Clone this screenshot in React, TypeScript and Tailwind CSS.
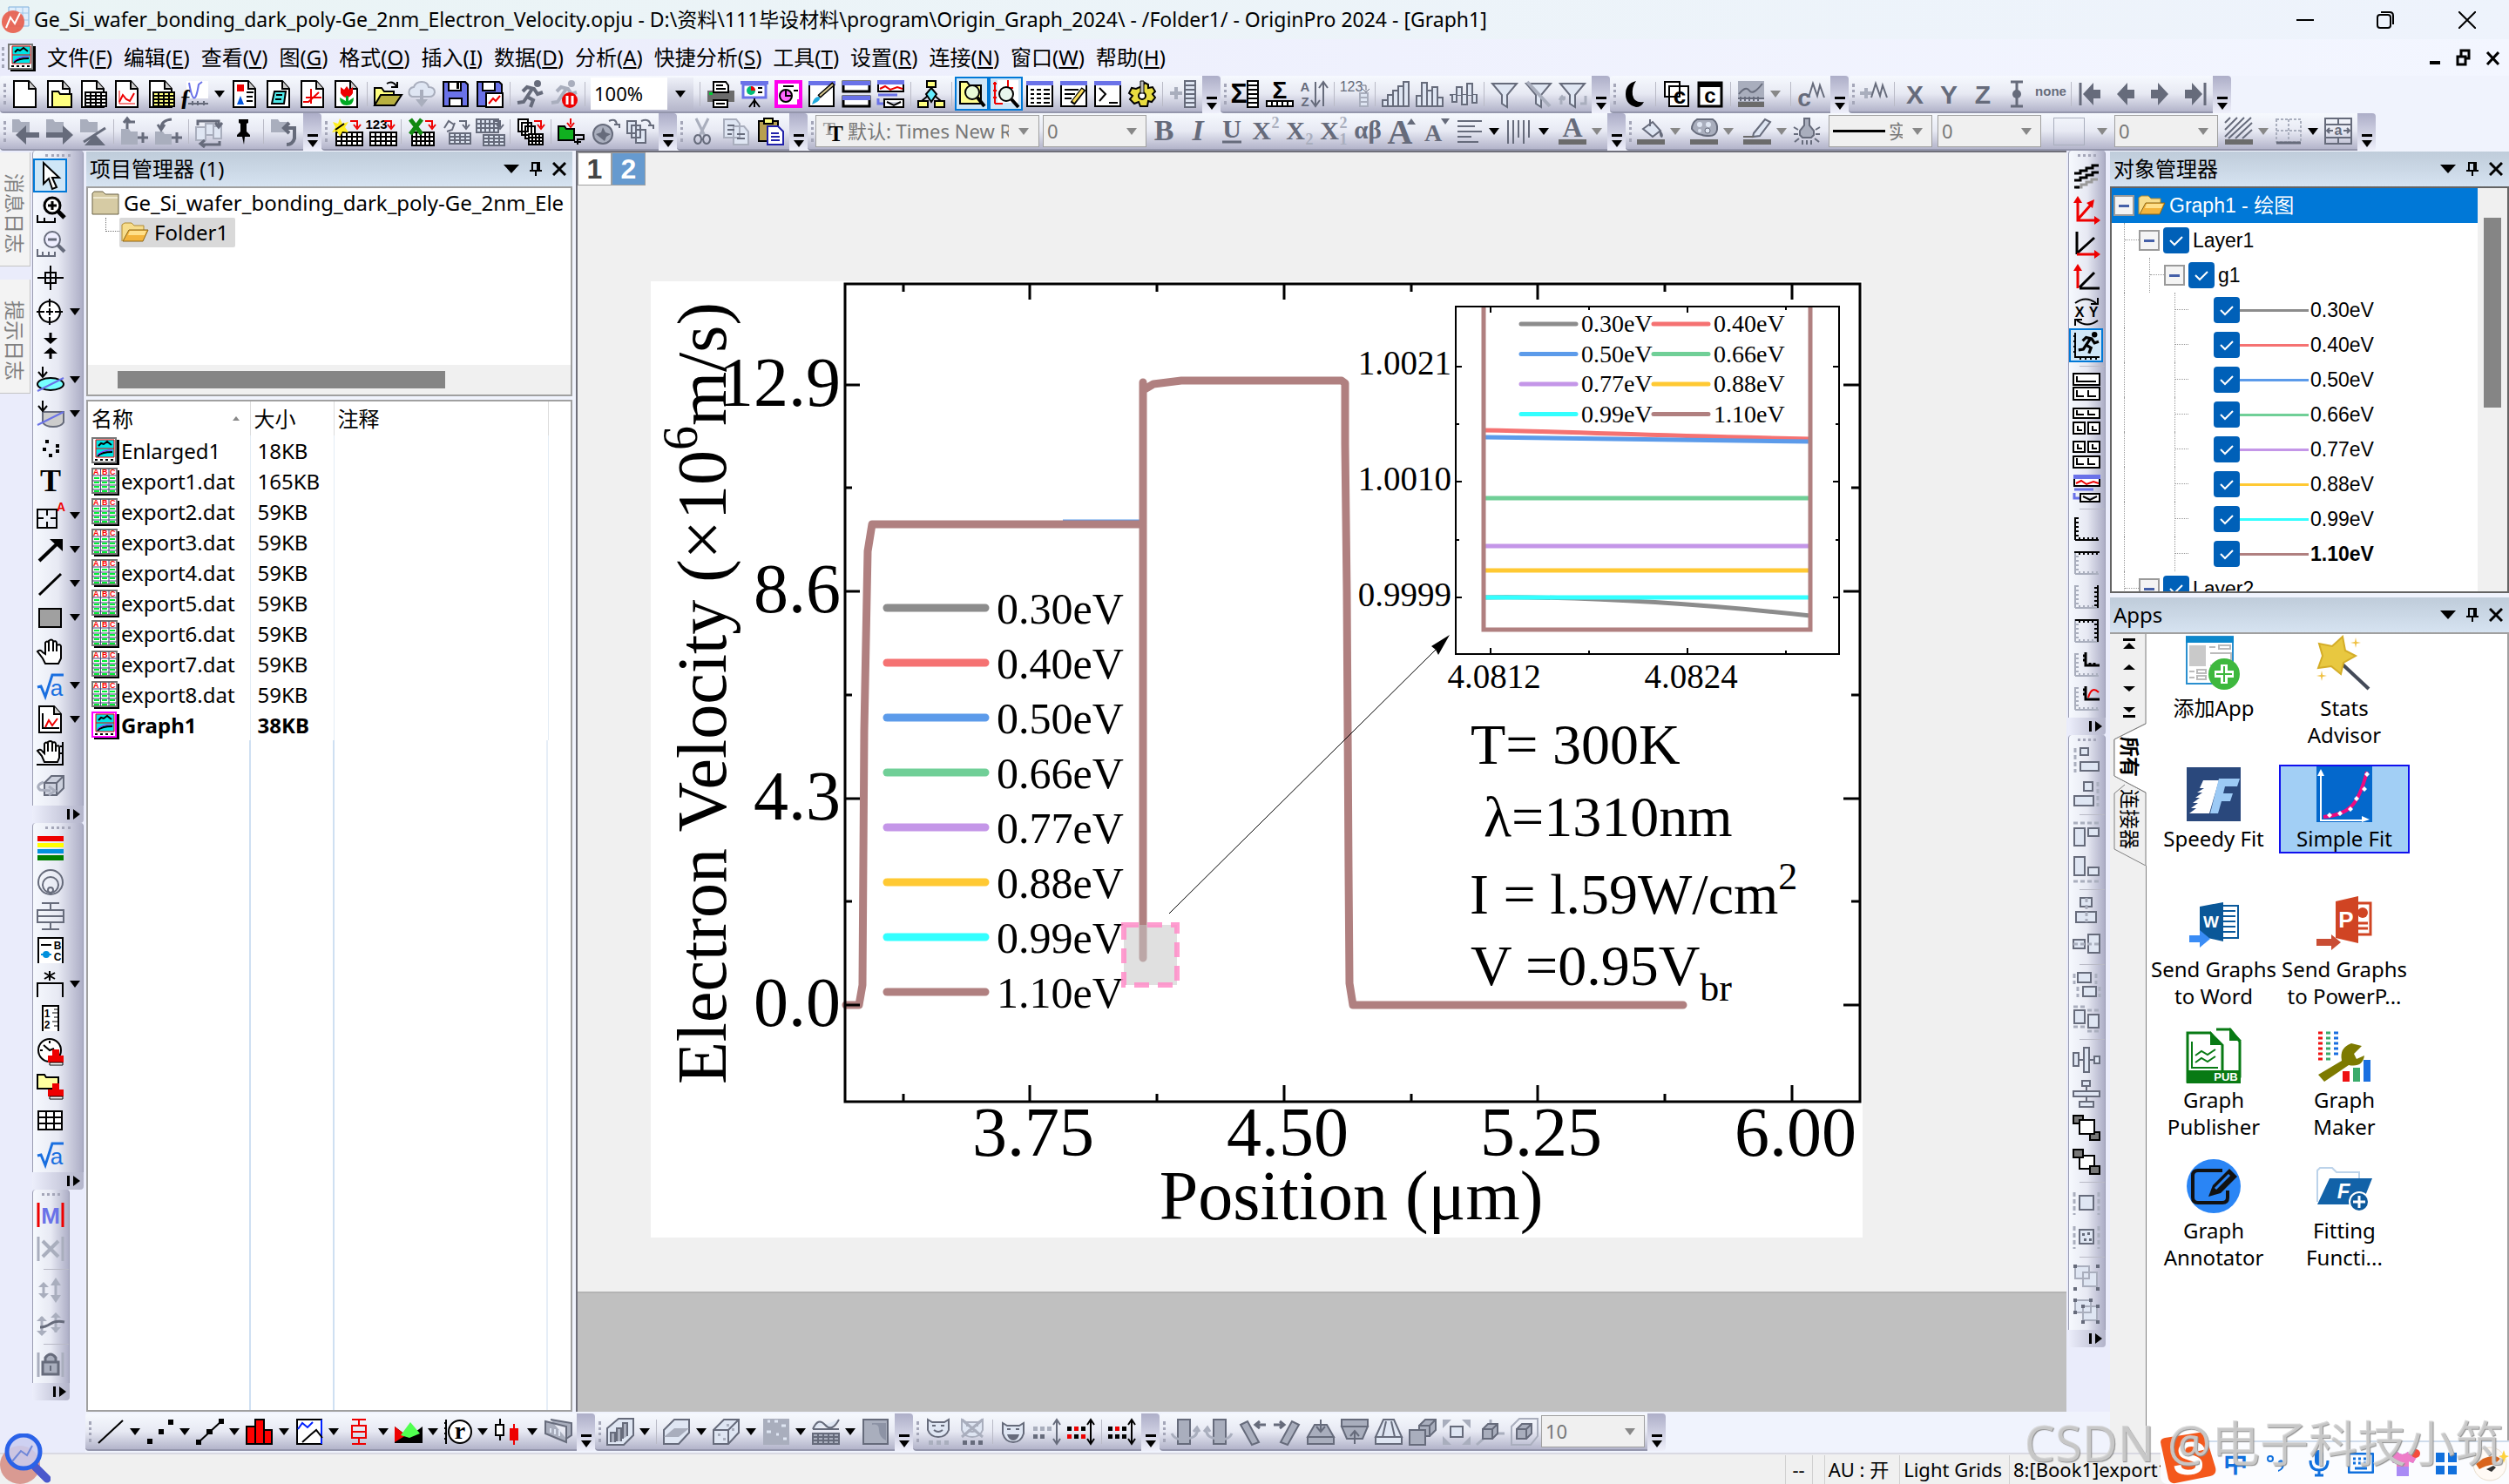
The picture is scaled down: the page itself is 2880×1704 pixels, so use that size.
import React, { ReactNode } from "react";

const GRAY = "#666b7b";
const PALE = "#a9aebd";
const RED = "#ee0000";
const BLUE = "#6a72e8";
const TINT = "#dfe6f3";

const series = [
    { name: "0.30eV", color: "#8c8c8c" },
    { name: "0.40eV", color: "#f57272" },
    { name: "0.50eV", color: "#5c9bea" },
    { name: "0.66eV", color: "#70cf97" },
    { name: "0.77eV", color: "#c496e8" },
    { name: "0.88eV", color: "#ffc933" },
    { name: "0.99eV", color: "#33ffff" },
    { name: "1.10eV", color: "#b08080" },
];

const files = [
    { name: "Enlarged1", size: "18KB", graph: true },
    { name: "export1.dat", size: "165KB" },
    { name: "export2.dat", size: "59KB" },
    { name: "export3.dat", size: "59KB" },
    { name: "export4.dat", size: "59KB" },
    { name: "export5.dat", size: "59KB" },
    { name: "export6.dat", size: "59KB" },
    { name: "export7.dat", size: "59KB" },
    { name: "export8.dat", size: "59KB" },
    { name: "Graph1", size: "38KB", graph: true, active: true },
];

const menus = [
    ["文件", "F"],
    ["编辑", "E"],
    ["查看", "V"],
    ["图", "G"],
    ["格式", "O"],
    ["插入", "I"],
    ["数据", "D"],
    ["分析", "A"],
    ["快捷分析", "S"],
    ["工具", "T"],
    ["设置", "R"],
    ["连接", "N"],
    ["窗口", "W"],
    ["帮助", "H"],
];

/* icon helpers, everything is drawn on a 32x32 grid */
const p = (d: string, stroke = "#000", fill = "none", w = 2) => <path d={d} stroke={stroke} fill={fill} strokeWidth={w} />;
const f = (d: string, fill = "#000") => <path d={d} fill={fill} />;
const t = (s: string, x: number, y: number, size: number, fill = GRAY, cls = "") => (
    <text x={x} y={y} fontSize={size} fill={fill} textAnchor="middle" className={cls}>
        {s}
    </text>
);
const g = (...c: ReactNode[]) => <>{React.Children.toArray(c)}</>;
const serif = "font-['Liberation_Serif',serif] font-bold";
const mono = "font-['Liberation_Sans',sans-serif] font-bold";
const sans = "font-['Liberation_Sans',sans-serif]";

const grid = (x: number, y: number, cols: number, rows: number, cw: number, ch: number, stroke = "#000", fill = "#fff") => {
    let d = `M${x} ${y}h${cols * cw}v${rows * ch}h${-cols * cw}z`;
    for (let i = 1; i < cols; i++) d += `M${x + i * cw} ${y}v${rows * ch}`;
    for (let i = 1; i < rows; i++) d += `M${x} ${y + i * ch}h${cols * cw}`;
    return p(d, stroke, fill);
};
const page = g(p("M3 1h17l8 9v21H3z", "#000", "#fff"), p("M20 1v9h8", "#000", "#ccc"));
const winBar = g(p("M1 3h29v27H1z", "#000", "#fff"), f("M0 1h31v5H0z", BLUE));
const redArrow = p("M20 4h8v7M24 8l4 5 4-5", RED);
const grayArrow = p("M20 4h8v7M24 8l4 5 4-5", GRAY);
const cube = (x: number, y: number, s: number, o: number, fill = TINT) =>
    p(`M${x} ${y}h${s}v${s}h${-s}zM${x} ${y}l${o} ${-o}h${s}v${s}l${-o} ${o}M${x + s} ${y}l${o} ${-o}`, GRAY, fill);
const mask = (c: string) =>
    g(
        p("M4 2l5 3h14l5-3v12q-3 8-12 8T4 14z", c, TINT),
        p("M9 9h4M19 9h4M11 14q5 4 10 0", c)
    );
const runner = (c: string) =>
    g(
        <circle cx="24" cy="4" r="4" fill={c} />,
        p("M7 13l5-5 8 2 4 6 6-2M18 10l-6 9 7 4-3 8M12 19l-4 6-7 1", c, "none", 4)
    );
const axis = (a: string, b: string) => g(p("M3 2v26M3 3h4M3 8h4M3 13h4M3 18h4M3 23h4", a), p("M3 28h27M8 28v-3M13 28v-3M18 28v-3M23 28v-3M28 28v-3", b));
const axisTR = (a: string, b: string) => g(p("M3 3h27M8 3v3M13 3v3M18 3v3M23 3v3", a), p("M29 2v26M29 8h-4M29 13h-4M29 18h-4M29 23h-4", b));
const stamp = g(f("M18 13h8v7h5v8H13v-8h5z", RED), p("M15 28h15v3H15z", "#000", "#fff", 1));
const boxes = (...r: number[][]) => g(...r.map(([x, y, w, h]) => p(`M${x} ${y}h${w}v${h}h${-w}z`, GRAY, TINT)));
const dash = (d: string) => <path d={d} stroke={PALE} strokeWidth="3" strokeDasharray="5 3" fill="none" />;
const bars = (c: string, x: number, hs: number[]) => g(...hs.map((h, i) => p(`M${x + i * 6} 30v${-h}h6v${h}z`, c, TINT)));

const icons: Record<string, ReactNode> = {
    newProject: page,
    newFolder: g(page, p("M8 13h7l2 3h13v15H8z", "#000", "#ffff80")),
    newBook: g(page, grid(7, 14, 4, 4, 6, 4)),
    newGraph: g(page, p("M7 25l4-8 4 5 4 2 5-9", RED), p("M7 12v15h18", RED, "none", 1)),
    newMatrix: g(page, grid(7, 14, 4, 4, 6, 4, "#000", "#ffff80")),
    newFunction: g(f("M6 1h25v20H6z", "#fff"), t("ƒ", 5, 29, 28, "#000", serif), p("M9 3q6 34 11 2l4-3", BLUE), p("M8 27h23M13 24v5M19 24v5M26 24v5", GRAY)),
    newLayout: g(page, f("M7 5h8v8H7z", RED), f("M7 28l4-10 4 10z", "#0055dd"), p("M18 14h8M18 19h7M18 24h7", "#000")),
    newNotes: g(page, p("M11 13h13l-2 14H8z", "#000", "#50e8e8"), p("M13 17h7M12 22h7", "#000")),
    newSheet: g(page, p("M5 25h6l12-11M14 10v17M8 20h18", RED)),
    newTulip: g(page, f("M9 8l4 3 3-4 3 4 4-3v7q-3 5-7 5t-7-5z", RED), f("M15 18h3v6l6-4q0 9-8 9t-8-9l7 4z", "#00aa22")),
    open: g(p("M1 29V9h8l3 4h11v5", "#000", "#ffff80"), p("M1 29l7-12h24l-8 12z", "#000", "#b8b040"), p("M15 4q7-4 11 3M20 8h7V2", "#000")),
    cloud: g(p("M5 19q-5-2-3-8 2-3 5-3Q9 2 16 2t8 6q7 0 7 6-1 5-6 5z", PALE, TINT), f("M14 11h4v11h5l-7 9-7-9h5z", PALE)),
    save: g(p("M2 2h25l3 3v25H2z", "#000", BLUE), p("M8 2h14v10H8z", "#000", "#fff"), p("M9 30v-9h14v9z", "#000", "#fff"), f("M17 3h3v7h-3z")),
    saveTemplate: g(p("M2 2h25l3 3v25H2z", "#000", BLUE), p("M8 2h14v10H8z", "#000", "#fff"), p("M12 15h19v16H12z", "#000", "#fff"), p("M15 27l5-6 3 3 5-6", RED)),
    recalc: runner(GRAY),
    recalcStop: g(runner(PALE), <circle cx="22" cy="23" r="9" fill={RED} />, p("M19 18v10M25 18v10", "#fff", "none", 3)),
    print: g(f("M1 12h31v13H1z", "#6b6b6b"), p("M8 2h14l3 4v8H8z", "#000", "#fff"), p("M8 23h16v8H8z", "#000", "#fff"), p("M11 6h8M11 10h11M11 27h10"), f("M3 14h4v3H3z", "#00cc33")),
    slide: g(f("M0 1h32v4H0z", BLUE), p("M3 5h26v15H3z", BLUE, "#fff", 3), <circle cx="12" cy="12" r="5" fill="#00bb77" />, f("M12 7a5 5 0 0 1 5 5h-5z", RED), p("M20 9h5M20 14h5M16 21v10M16 23l-6 8M16 23l6 8")),
    pagePink: g(p("M2 2h28v28H2z", "#ff00ee", "#fff", 4), <circle cx="13" cy="18" r="7" fill="#ff66ff" stroke="#000" strokeWidth="2" />, p("M13 11v7h7M10 7h12M22 12h5"), f("M26 22h4v8h-4z", "#ff00ee")),
    brush: g(p("M1 3h28v27H1z", "#000", "#fff"), f("M0 1h31v5H0z", BLUE), f("M4 28q2-9 8-9 4 4-8 9z", "#20aadd"), p("M12 19L29 4", "#000", "none", 5), p("M13 18L28 5", "#d8c890", "none", 2)),
    tile: g(p("M1 2h30v11H1zM1 19h30v11H1z", "#000", "#fff", 3), f("M0 1h32v5H0zM0 18h32v5H0z", BLUE)),
    cascade: g(p("M2 2h29v11H2z", "#000", "#fff"), f("M1 0h31v5H1z", BLUE), p("M4 10l6-3 6 4 8-3 6 2", RED), p("M2 17h22M2 21v6h6", BLUE, "none", 3), p("M9 22h22v9H9zM12 25l8 4 8-4", "#000", "#fff")),
    tree: g(p("M16 8v6M16 22v3M5 24l7-6M27 24l-7-6"), p("M11 1h10v7H11zM1 24h11v7H1zM20 24h11v7H20z", "#000", "#ffff80"), p("M16 9l6 7-6 9-6-9z", "#000", "#66eeff")),
    projectExplorer: g(p("M2 27V2h8l3 4h13v21z", "#000", "#ffff90"), <circle cx="16" cy="14" r="8" fill="#e9fbd8" stroke="#000" strokeWidth="2" />, p("M22 20l8 10", "#000", "none", 4)),
    objectManager: g(f("M6 0h24v26H6z", "#fff"), p("M3 2v25M1 4h4M1 12h4M1 20h4M3 27h9M18 0v9h6", RED), <circle cx="16" cy="16" r="8" fill="#e9f5ee" stroke="#000" strokeWidth="2" />, p("M22 22l8 9", "#000", "none", 4)),
    resultsLog: g(winBar, p("M5 11h4M12 11h5M20 11h7M5 16h4M12 16h5M20 16h7M5 21h4M12 21h5M20 21h7M5 26h4M12 26h5M20 26h7")),
    codeBuilder: g(winBar, p("M5 11h16M5 16h12M5 21h8"), p("M14 27L27 10", "#000", "none", 6), p("M15 25L26 11", "#ffe060", "none", 3)),
    scriptWindow: g(winBar, p("M6 9l7 7-7 8M17 26h10")),
    gears: g(p("M16 7l3-4 4 2v4l5-1 3 5-3 3 3 4-4 5-4-1-1 6h-8l-2-5-5 2-5-5 3-4-4-3 3-6 5 1z", "#000", "#e8dc40"), <circle cx="16" cy="18" r="4" fill="#fff" stroke="#000" strokeWidth="2" />, p("M14 1h4v14h-4z", "#000", "#bbb", 1)),
    addColumn: g(p("M1 15h14M8 8v14", PALE, "none", 4), grid(18, 1, 1, 6, 12, 5, GRAY, TINT)),
    sumRow: g(t("Σ", 8, 26, 32, "#000", mono), grid(18, 1, 1, 6, 12, 5)),
    sumColumn: g(t("Σ", 16, 21, 28, "#000", mono), grid(1, 24, 5, 1, 6, 6)),
    sort: g(t("A", 6, 13, 15, GRAY, mono), t("Z", 6, 30, 15, GRAY, mono), p("M18 2v28M27 2v28M13 23l5 7 5-7M22 9l5-7 5 7", GRAY)),
    setValues: g(t("123", 12, 13, 16, GRAY, sans), p("M24 6h5v6M25 10l4 4 4-4", GRAY, "none", 1), grid(22, 15, 1, 3, 9, 5, PALE, TINT)),
    histogram: bars(GRAY, 1, [7, 13, 18, 23, 28]),
    histogram2: bars(GRAY, 1, [12, 27, 18, 22, 10]),
    histogram3: g(p("M0 17h32", GRAY), p("M3 17v8h5V8h6v20h6V4h6v22h5v-9", GRAY, TINT)),
    filter: p("M2 4h28L19 17v14l-6-4V17z", GRAY, TINT),
    filterOff: g(p("M2 4h28L19 17v14l-6-4V17z", GRAY, TINT), p("M3 2l26 28", PALE, "none", 4)),
    filterRedo: g(p("M2 4h28L19 17v14l-6-4V17z", GRAY, TINT), p("M3 28v-8h5M31 18v9h-6M1 23l3-4 3 4", PALE, "none", 3)),
    moon: f("M17 1Q5 4 5 16t12 15q6 0 9-6-11 2-13-8-1-9 4-16z"),
    copyC: g(p("M3 2h17v17H3zM8 7h22v23H8z", "#000", "#fff"), t("c", 20, 27, 26, "#000", mono)),
    boxC: g(p("M3 3h26v27H3z", "#000", "#fff", 3), f("M2 2h28v6H2z"), t("c", 16, 26, 24, "#000", mono)),
    plotTheme: g(f("M1 1h30v19H1zM1 24h30v7H1z", PALE), p("M2 16q8-10 12-4t15-8M1 21h30M4 19v5M9 19v5M14 19v5M19 19v5M24 19v5", GRAY), f("M1 25h30v6H1z", "#6b6b6b")),
    addC: g(t("c", 8, 30, 28, GRAY, mono), p("M13 20l5-16 5 14 3-12 5 14", GRAY)),
    addMarker: g(p("M0 15h14M7 9v12", PALE, "none", 4), p("M13 20l5-16 5 14 3-12 5 14", GRAY)),
    X: t("X", 16, 27, 30, GRAY, mono),
    Y: t("Y", 16, 27, 30, GRAY, mono),
    Z: t("Z", 16, 27, 30, GRAY, mono),
    errorBar: g(p("M9 2h14M9 30h14M16 2v28", GRAY, "none", 3), <circle cx="16" cy="16" r="5" fill={GRAY} />),
    none: t("none", 16, 18, 15, GRAY, mono),
    first: g(p("M3 3v26", GRAY, "none", 3), f("M6 16L18 3v8h8v10h-8v8z", GRAY)),
    prev: f("M6 16L18 3v8h8v10h-8v8z", GRAY),
    next: f("M26 16L14 3v8H6v10h8v8z", GRAY),
    last: g(p("M29 3v26", GRAY, "none", 3), f("M26 16L14 3v8H6v10h8v8z", GRAY)),
    back: g(f("M1 2h8l2 3h10v12H1z", PALE), f("M5 20l12-11v8h15v6H17v8z", GRAY)),
    forward: g(f("M1 2h8l2 3h10v12H1z", PALE), f("M32 20L20 9v8H1v6h19v8z", GRAY)),
    noFolder: g(f("M1 2h8l2 3h10v12H1z", PALE), p("M5 28L30 12", GRAY, "none", 3), f("M6 32l12-13 12 13z", GRAY)),
    folderUp: g(f("M1 13h9l2 3h8v15H1z", PALE), p("M8 13V5h9M4 6l4-5 4 5M20 23h12M26 17v12", GRAY, "none", 3)),
    folderDown: g(f("M1 16h9l2 3h8v12H1z", PALE), p("M8 12q0-9 12-10M4 8l4 6 4-6M20 23h12M26 17v12", GRAY, "none", 3)),
    swap: g(p("M1 11h11v15H1zM12 7h9v13h-9zM21 10h9v14h-9z", PALE, TINT), p("M3 9V4h24v6M23 6l4 5 4-5M28 27v4H8M11 26l-5 4 5 4", GRAY, "none", 3)),
    pin: f("M11 2h11v4l-2 1v9l4 4v2h-6l-1 9-2-9H9v-2l4-4V7l-2-1z"),
    undoFolder: g(f("M1 2h8l2 3h10v12H1z", PALE), p("M18 12h10v12q-2 7-9 7M22 6l-6 6 6 6", GRAY, "none", 4)),
    importWizard: g(grid(4, 17, 5, 3, 6, 5), f("M8 1l3 6 7-2-4 6 4 6-7-1-3 6-3-6-6 1 4-6-3-6 6 2z", "#ffee22"), p("M3 14l10-7", "#000"), redArrow),
    import123: g(grid(4, 17, 5, 3, 6, 5), t("123", 11, 13, 15, "#000", mono), redArrow),
    importExcel: g(grid(5, 17, 5, 3, 5, 5), p("M3 2l13 17M16 2L3 19", "#118811", "none", 5), redArrow),
    reimport: g(grid(9, 18, 4, 3, 6, 4, GRAY, TINT), p("M3 12l5-8 6 4M15 6l-3 8-6 2", GRAY), grayArrow),
    reimportGrid: g(grid(1, 2, 5, 3, 5, 5, GRAY, TINT), grid(9, 20, 4, 3, 6, 4, GRAY, TINT), grayArrow),
    importMulti: g(p("M2 2h11v14H2zM6 6h11v14H6zM10 10h11v14H10z", "#000", "#fff"), grid(14, 19, 4, 3, 4, 4), redArrow),
    connector: g(p("M1 10h7l2 3h9v13H1z", "#000", "#10b020"), p("M15 1v7M11 6l4 5 4-5", RED), p("M20 20h10v5h-7v6M19 28h8")),
    webData: g(<circle cx="13" cy="19" r="11" fill={PALE} stroke={GRAY} strokeWidth="2" />, f("M13 11l3 6 6 2-5 3-2 5-5-4-5-4 6-2z", GRAY), p("M20 4q8-4 9 4M26 8h6v4", GRAY)),
    dataSource: g(p("M2 4h10v14H2zM7 9h10v14H7zM12 14h11v15H12z", GRAY, TINT), p("M18 4q10-4 11 6M26 9h6v4", GRAY)),
    cut: g(p("M9 1l10 20M23 1L13 21", PALE, "none", 3), p("M11 20a4 5 0 1 0 .1 0M21 20a4 5 0 1 0 .1 0", GRAY)),
    copy: g(p("M2 2h14l4 5v16H2zM13 10h12l5 6v15H13z", PALE, TINT), p("M6 9h8M6 14h8M6 19h5M17 19h9M17 24h9", GRAY)),
    paste: g(p("M3 4h22v23H3z", "#000", "#b8a050"), p("M9 1h10v6H9z", "#000", "#ffff80"), p("M13 10h12l6 6v15H13z", "#2020aa", "#fff"), p("M17 18h9M17 22h10M17 26h10", "#2020aa")),
    bold: t("B", 16, 26, 34, GRAY, serif),
    italic: t("I", 16, 26, 34, GRAY, serif + " italic"),
    underline: g(t("U", 16, 23, 30, GRAY, serif), p("M5 28h22", GRAY, "none", 3)),
    superscript: g(t("X", 11, 25, 30, GRAY, serif), t("2", 27, 12, 18, PALE, serif)),
    subscript: g(t("X", 11, 25, 30, GRAY, serif), t("2", 27, 31, 18, PALE, serif)),
    supsub: g(t("X", 11, 25, 30, GRAY, serif), t("2", 27, 12, 18, PALE, serif), t("1", 27, 31, 18, PALE, serif)),
    greek: t("αβ", 16, 24, 29, GRAY, serif),
    bigger: g(t("A", 14, 30, 40, GRAY, serif), f("M22 8l5-7 5 7z", GRAY)),
    smaller: g(t("A", 13, 27, 28, GRAY, serif), f("M22 1l5 7 5-7z", GRAY)),
    align: p("M2 4h28M2 10h20M2 16h28M2 22h16M2 28h24", GRAY),
    verticalLines: p("M3 3v27M9 3v27M15 3v20M21 3v27M27 3v20", GRAY),
    fontColor: g(t("A", 16, 22, 32, GRAY, serif), f("M0 25h32v6H0z", "#6b6b6b")),
    bucket: g(p("M7 13L18 5l9 10-9 7zM15 10V2", GRAY, TINT), f("M26 14q6 6 3 9-4 0-3-9z", GRAY), f("M0 25h32v6H0z", "#6b6b6b")),
    palette: g(p("M8 2h18q6 4 5 12-1 7-9 7-6 0-8-1-8-1-12-7 0-7 6-11z", GRAY, PALE), <circle cx="11" cy="8" r="3" fill={TINT} />, <circle cx="21" cy="8" r="3" fill={TINT} />, <circle cx="11" cy="15" r="2" fill={TINT} />, <circle cx="20" cy="15" r="3" fill={TINT} stroke={GRAY} />, f("M0 25h32v6H0z", "#6b6b6b")),
    pen: g(p("M12 18L25 2l6 3-12 16-8 1z", GRAY, TINT), f("M0 21h12v2H0zM0 25h32v6H0z", "#6b6b6b")),
    bulb: g(p("M13 1h6v8l5 6v5l-3 3H11l-3-3v-5l5-6z", GRAY, PALE), p("M1 11l5 3M31 11l-5 3M1 19h5M26 19h5M2 28l5-4M30 28l-5-4M11 26v5M16 26v5M21 26v5", GRAY)),
    hatch: g(p("M0 6l6-6M0 14L14 0M0 22L22 0M4 24L30 0M12 24l19-18M20 24l11-10", GRAY), f("M0 25h32v6H0z", "#6b6b6b")),
    borders: g(<path d="M2 2h28v26H2zM2 15h28M16 2v26" fill="none" stroke={PALE} strokeWidth="2" strokeDasharray="3 2" />, p("M2 29h28", GRAY, "none", 3)),
    mergeCells: g(p("M1 1h30v29H1zM1 8h30M1 23h30M16 1v7M16 23v7", GRAY), t("a", 16, 20, 16, GRAY, mono), p("M3 15h7M29 15h-7M6 12l-3 3 3 3M26 12l3 3-3 3", GRAY)),
    pointer: p("M8 1v24l6-6 4 12 5-2-5-11h8z", "#000", "#fff"),
    zoomIn: g(<circle cx="18" cy="11" r="9" fill="#fff" stroke="#000" strokeWidth="3" />, p("M13 11h10M18 6v10", "#000", "none", 3), p("M24 17l8 8", "#000", "none", 5), p("M1 22v8h20v-5M9 30v-5")),
    zoomOut: g(<circle cx="18" cy="11" r="9" fill="#eef" stroke={GRAY} strokeWidth="2" />, p("M13 11h10", GRAY, "none", 3), p("M24 17l8 8", GRAY, "none", 4), p("M1 22v8h20v-5M7 30v-5M14 30v-5", GRAY)),
    crosshair: p("M16 2v28M1 16h30M10 10h12v12H10z"),
    target: g(<circle cx="15" cy="16" r="12" fill="#fff" stroke="#000" strokeWidth="2" />, p("M15 1v9M15 22v9M0 16h9M21 16h9M15 12v8M11 16h8")),
    converge: g(p("M16 1v8M16 23v8", "#000", "none", 3), f("M8 7h16l-8 7zM8 25h16l-8-7z")),
    maskLens: g(<ellipse cx="16" cy="21" rx="15" ry="7" fill="#7ff" stroke="#000" strokeWidth="2" />, p("M1 29L31 14", BLUE), p("M7 1v10M2 7l5 6 5-6")),
    maskFace: g(p("M7 14h24v12q-3 5-12 5t-12-5z", GRAY, "#ccc"), p("M1 29L31 14", BLUE), p("M7 1v10M2 7l5 6 5-6")),
    dots: f("M10 7h4v4h-4zM22 12h4v4h-4zM7 16h4v4H7zM22 18h4v4h-4zM14 23h4v4h-4z"),
    text: t("T", 16, 27, 36, "#000", serif),
    annotation: g(p("M1 9h22v21H1zM12 9v7M12 23v7M1 19h7M16 19h7"), t("A", 28, 11, 14, RED, mono)),
    arrowTool: g(p("M3 29L24 9", "#000", "none", 4), f("M15 4h15v14z")),
    lineTool: p("M3 29L28 5", "#000", "none", 3),
    rectTool: p("M3 6h25v21H3z", "#000", "#a0a0a0"),
    hand: p("M10 30l-3-6-6-8q3-3 6 1l3 2V6q2-3 4 0V4q3-3 5 0v1q3-2 4 1v3q4-2 5 1v14l-3 6zM14 6v10M19 5v11M23 7v9", "#000", "#fff"),
    sqrt: g(p("M1 18l4-1 5 12L18 4h13", "#1a6fe0", "none", 3), t("a", 23, 28, 26, "#1a6fe0", sans)),
    graphTool: g(page, p("M7 9v17h19"), p("M10 25l4-8 4 6 6-8", RED)),
    handFrame: g(p("M9 26l-3-7-5-6q3-3 6 1l2 2V5q2-3 4 0V3q3-2 5 0v1q3-2 4 1v3q4-2 4 1v12l-2 5zM13 5v9M18 4v10M22 6v8", "#000", "#fff"), p("M0 29h31M30 3v26M27 8h4M27 16h4")),
    rotate: g(cube(9, 11, 14, 8, "#ccd0dd"), p("M8 10q-10 4-4 9l12 1M14 15l7 5-7 5", PALE, "none", 3)),
    colorStripes: g(f("M1 2h30v6H1z", RED), f("M1 10h30v5H1z", "#ffff00"), f("M1 17h30v5H1z", "#0090dd"), f("M1 24h30v6H1z", "#008000")),
    rings: g(<circle cx="16" cy="16" r="14" fill="none" stroke={GRAY} strokeWidth="2" />, <circle cx="16" cy="19" r="9" fill="none" stroke={GRAY} strokeWidth="2" />, <circle cx="16" cy="25" r="3" fill="none" stroke={GRAY} strokeWidth="2" />),
    boxH: p("M6 1h20M6 31h20M16 1v8M16 23v8M1 9h30v14H1zM1 16h30", GRAY),
    legendTool: g(p("M2 31V2h28v29", "#000", "#fff"), p("M5 10h12"), p("M5 21h12", "#0090dd"), <circle cx="11" cy="21" r="4" fill="#0090dd" />, t("B", 24, 15, 12, "#000", mono), t("C", 24, 28, 12, "#000", mono)),
    asterisk: p("M1 31V15h29v16M15 1v11M9 3l12 7M21 3L9 10"),
    ruler: g(p("M7 31V2h18v29", "#000", "#fff"), t("1", 12, 15, 12, "#000", mono), t("2", 12, 28, 12, "#000", mono), p("M25 6h-5M25 10h-7M25 15h-5M25 20h-7M25 25h-5", "#000", "none", 1)),
    clockStamp: g(<circle cx="15" cy="14" r="13" fill="#fff" stroke="#000" strokeWidth="2" />, p("M8 8l7 6 5-2M15 3v3M4 14h3"), stamp),
    folderStamp: g(p("M1 17V3h8l2 3h14v13H1z", "#000", "#ffffa0"), stamp),
    tableTool: grid(2, 6, 3, 3, 9, 7),
    markM: g(p("M2 2v28M30 2v28", RED, "none", 3), t("M", 16, 26, 26, BLUE, mono)),
    markX: g(p("M2 2v28M30 2v28", PALE, "none", 3), p("M7 7l18 18M25 7L7 25", PALE, "none", 4)),
    updown: g(p("M8 9v14M22 6v20", PALE, "none", 3), f("M2 13l6-6 6 6zM2 20l6 6 6-6zM16 11l6-9 6 9zM16 22l6 9 6-9z", PALE)),
    updownLine: g(p("M6 8v20M22 6v20", PALE, "none", 3), f("M0 13l6-6 6 6zM0 24l6 6 6-6zM16 9l6-6 6 6zM16 20l6 6 6-6z", PALE), p("M4 20q6 0 12-4t16-2", GRAY, "none", 3)),
    lock: g(p("M2 2v28M30 2v28", PALE, "none", 3), p("M10 12V8q6-8 12 0v4M7 13h18v14H7z", GRAY, PALE, 3), p("M16 17v6", GRAY)),
    plotLine: p("M2 29L30 3"),
    plotScatter: f("M1 24h6v6H1zM14 13h6v6h-6zM25 2h6v6h-6z"),
    plotLineSymbol: g(p("M3 28L29 4"), f("M0 25h6v6H0zM12 13h7v6h-7zM26 1h6v6h-6z")),
    plotBar: p("M1 30V10h10v20zM11 30V2h10v28zM21 30V14h9v16z", "#000", "#ff0000"),
    plotMulti: g(p("M2 2h28v28H2z", "#000", "#fff"), p("M3 13l5-7 6 5 6-6M30 2v28", "#0020ff"), p("M8 28l10-9 6-5 7 9")),
    plotBox: p("M8 2h16M8 30h16M16 2v7M16 23v7M8 9h16v14H8zM8 16h16", RED),
    plotArea: g(f("M0 10l16 12 16-12v19H0z"), f("M0 10l13 10L0 28z", RED), f("M7 20L18 5l11 13-12 5z", "#50ff50")),
    plotPolar: g(<circle cx="18" cy="16" r="13" fill="#fff" stroke="#000" strokeWidth="2" />, p("M2 2v28M0 6h3M0 12h3M0 18h3M0 24h3"), t("r", 18, 24, 28, "#000", serif)),
    plotCandle: g(p("M7 1v7M7 20v6M2 8h9v12H2z", "#000", "#fff"), p("M23 7v24", RED), f("M18 12h10v14H18z", RED)),
    plotTemplate: g(p("M2 4l24 6v18L2 18zM26 24l6-4V6L8 2", GRAY, PALE), p("M8 12v5M13 13v6M18 14v7", TINT)),
    bar3d: g(p("M1 12L14 1h17v19L20 31H1z", GRAY, TINT), p("M5 28V17h5v11M12 27V12h5v15M19 24V6h5v15", GRAY, PALE)),
    surface3d: g(p("M1 14L13 2h17v15L18 30H1z", GRAY, TINT), f("M1 22l12-10h17L18 22z", PALE)),
    scatter3d: g(p("M1 14L13 2h17v15L18 30H1zM1 14h17v16M18 14L30 2", GRAY, TINT), f("M6 18h3v3H6zM12 23h3v3h-3zM16 7h3v3h-3zM22 12h3v3h-3z", PALE)),
    contour: g(f("M1 1h30v30H1z", PALE), p("M6 4h3M14 4h4M22 9h5M5 16h5M16 19h3M24 24h4", TINT, "none", 3)),
    waves: g(p("M1 13q6-14 14-5t16-6M1 13h30", GRAY, TINT), grid(1, 18, 5, 3, 6, 4, GRAY, PALE)),
    heat: g(p("M2 2h28v28H2z", GRAY, PALE), f("M12 8q8-2 8 6t8 12V6H12z", "#8d93a5")),
    mask1: g(mask(GRAY), f("M5 26h5v5H5zM14 26h5v5h-5zM23 26h5v5h-5z", PALE)),
    mask2: g(mask(PALE), p("M4 2l24 20M28 2L4 22", PALE, "none", 3), f("M5 26h5v5H5zM14 26h5v5h-5zM23 26h5v5h-5z", GRAY)),
    mask3: g(p("M4 6l5 3h14l5-3v12q-3 10-12 10T4 18z", GRAY, TINT), p("M9 13h4M19 13h4", GRAY), f("M9 19h14q-2 7-7 7t-7-7z", GRAY)),
    cellsGray: g(f("M0 10h5v5H0zM8 10h5v5H8zM16 10h5v5h-5z", PALE), f("M0 19h5v5H0zM8 19h5v5H8z", GRAY), p("M27 3v26M23 8l4-6 4 6M23 24l4 6 4-6", GRAY)),
    cellsRed: g(f("M0 10h5v5H0zM16 10h5v5h-5zM8 19h5v5H8z"), f("M8 10h5v5H8zM0 19h5v5H0zM16 19h5v5h-5z", RED), p("M27 3v26M23 8l4-6 4 6M23 24l4 6 4-6")),
    cellsBlack: g(f("M0 10h5v5H0zM16 10h5v5h-5zM0 19h5v5H0zM8 19h5v5H8zM16 19h5v5h-5z"), f("M8 10h5v5H8z", RED), p("M27 3v26M23 8l4-6 4 6M23 24l4 6 4-6")),
    spinLeft: g(p("M8 2h14v28H8z", GRAY, PALE), p("M1 18q4 9 18 6 12-2 11-10M26 16l4-5 3 5", PALE, "none", 3)),
    spinRight: g(p("M10 2h14v28H10z", GRAY, PALE), p("M31 18q-4 9-18 6-12-2-11-10M-1 16l4-5 3 5", PALE, "none", 3)),
    tiltLeft: g(p("M2 8l8-4 13 24-8 3z", GRAY, PALE), p("M31 8H20M24 4l-5 4 5 4", GRAY, "none", 3)),
    tiltRight: g(p("M30 8l-8-4L9 28l8 3z", GRAY, PALE), p("M1 8h11M8 4l5 4-5 4", GRAY, "none", 3)),
    raise: g(p("M1 22l8-14h14l8 14zM1 22h30v8H1z", GRAY, PALE), p("M16 2v12M11 10l5 6 5-6", GRAY)),
    lower: g(p("M1 10h30l-6 14H7zM1 2h30v8H1z", GRAY, PALE), p("M16 16v14M11 21l5-6 5 6", GRAY)),
    perspective: g(p("M10 2h12l9 20H1zM1 22h30v8H1zM13 4l-4 18M19 4l4 18", GRAY, TINT)),
    boxes3d: g(cube(12, 9, 12, 7, PALE), p("M1 14h18v17H1z", GRAY, PALE)),
    fit3d: g(f("M0 2h10L0 12zM32 2H22l10 10zM0 31h10L0 21zM32 31H22l10-10z", PALE), p("M9 10h14v12H9z", GRAY, TINT)),
    axisCube: g(p("M16 2v10M22 18h10M9 23l-9 8", PALE, "none", 3), cube(7, 13, 11, 6, PALE)),
    frameCube: g(p("M1 10L10 1h21v20l-8 10H1z", PALE), cube(7, 13, 11, 6, PALE)),
    slashes: g(
        p("M4 29h6v-3h6v-3h6v-3h7", "#999", "none", 3),
        p("M2 13h7v-3h7V7h7V4h7M2 21h7v-3h7v-3h7v-3h7M2 29h6", "#000", "none", 3)
    ),
    axesRed: g(p("M6 4v24h24M6 27L22 9", RED, "none", 3), f("M1 8l5-8 5 8zM25 23l7 5-7 5zM16 8l9-4-2 10z", RED)),
    axesBlack: g(p("M5 2v26M5 27L25 9", "#000", "none", 3), p("M5 28h24", RED, "none", 3), f("M25 23l7 5-7 5z", RED)),
    axesUp: g(p("M6 5v23", RED, "none", 3), f("M1 8l5-8 5 8z", RED), p("M8 28h23M8 27L25 10", "#000", "none", 3)),
    swapXY: g(t("X", 8, 22, 16, "#000", mono), t("Y", 24, 22, 16, "#000", mono), p("M3 6q12-9 24 0M29 0v7h-8M29 26q-12 9-24 0M3 32v-7h8")),
    rescale: g(p("M3 1v28h28M1 5h2M1 11h2M1 17h2M1 23h2M9 29v3M15 29v3M21 29v3M27 29v3"), <g transform="translate(6 0) scale(.8)">{runner("#000")}</g>),
    layout3: g(p("M1 1h30v13H1zM1 17h30v14H1z", "#000", "#fff"), p("M5 4v6h22M5 20v7h8M18 20v7h9")),
    layout4: g(p("M1 2h30v11H1zM1 18h13v13H1zM18 18h13v13H18z", "#000", "#fff"), p("M5 4v5h8M18 4v5h8M6 22v5h5M23 22v5h5")),
    layout5: g(p("M1 1h13v12H1zM18 1h13v12H18zM1 18h30v13H1z", "#000", "#fff"), p("M6 4v5h5M23 4v5h5M5 20v7h8M18 20v7h8")),
    axisBL: axis("#000", "#000"),
    axisT: g(axis(PALE, PALE), p("M2 3h29M8 3v3M13 3v3M18 3v3M23 3v3M28 3v3")),
    axisR: g(axis(PALE, PALE), p("M29 2v26M29 5h-4M29 10h-4M29 15h-4M29 20h-4M29 25h-4")),
    axisTRight: g(axis(PALE, PALE), axisTR("#000", "#000")),
    axisInset: g(axis(PALE, PALE), p("M15 1v15h16M12 5h3M12 10h3M20 16v-3M25 16v-3", "#000", "none", 3)),
    axisInsetPlot: g(axis(PALE, PALE), p("M15 1v15h16M12 5h3M12 10h3", "#000", "none", 3), p("M18 14q4-14 12-6", RED)),
    alignLeft: g(dash("M3 2v28"), boxes([9, 2, 9, 8], [9, 18, 21, 10])),
    alignRight: g(dash("M29 2v28"), boxes([13, 2, 10, 10], [2, 18, 22, 11])),
    alignTop: g(dash("M1 2h30"), boxes([2, 8, 12, 20], [18, 8, 12, 9])),
    alignBottom: g(dash("M1 30h30"), boxes([2, 2, 12, 21], [18, 14, 12, 9])),
    centerV: g(boxes([9, 2, 13, 10], [4, 18, 23, 12]), dash("M16 2v28")),
    centerH: g(boxes([1, 11, 13, 10], [18, 5, 13, 21]), dash("M1 16h30")),
    sameWidth: g(dash("M2 3v12M27 3v12M6 18v12M31 18v12"), boxes([6, 2, 15, 11], [12, 18, 15, 11])),
    sameHeight: g(dash("M1 2h13M1 25h13M17 6h13M17 30h13"), boxes([2, 6, 12, 15], [18, 11, 12, 15])),
    distributeH: g(p("M7 16h18", GRAY), boxes([1, 8, 6, 15], [13, 2, 6, 28], [25, 12, 6, 8])),
    distributeV: g(p("M16 6v20", GRAY), boxes([11, 1, 9, 6], [1, 13, 30, 6], [8, 25, 16, 6])),
    bringFront: g(p("M1 2h11v9H1zM20 21h11v9H20z", "#000", "#777"), p("M8 7h17v16H8z", "#000", "#fff")),
    sendBack: g(p("M8 9h17v15H8z", "#000", "#fff"), p("M1 2h11v9H1zM20 21h11v9H20z", "#000", "#777")),
    group: g(boxes([8, 8, 16, 16]), dash("M2 4v26M30 4v26")),
    ungroup: g(boxes([8, 8, 16, 16]), dash("M2 4v26M30 4v26"), f("M11 12h3v3h-3zM17 11h3v3h-3zM13 18h3v3h-3zM19 18h3v3h-3z", GRAY)),
    cropA: g(p("M3 3h16v14H3zM12 10h16v16H12z", PALE, TINT), f("M1 1h4v4H1zM27 1h4v4h-4zM1 27h4v4H1zM27 27h4v4h-4z", GRAY)),
    cropB: g(p("M3 3h18v14H3zM12 10h16v16H12z", PALE, TINT), f("M1 1h4v4H1zM19 1h4v4h-4zM1 15h4v4H1zM10 8h4v4h-4zM27 8h4v4h-4zM10 26h4v4h-4zM27 26h4v4h-4z", GRAY)),
};

function Icon({ name }: { name: string }) {
    return (
        <svg viewBox="0 0 32 32" className="h-8 w-8 shrink-0 overflow-visible">
            {icons[name]}
        </svg>
    );
}

function Caret({ pale = false }: { pale?: boolean }) {
    return (
        <svg viewBox="0 0 12 8" className="h-2 w-3">
            <path d="M0 0h12L6 8z" fill={pale ? "#888" : "#000"} />
        </svg>
    );
}

/* "name" is a button, "name>" has a drop arrow, "name~" a disabled one, "*name" is pressed, "|" is a divider, "_" a small gap */
function Items({ list, vertical = false }: { list: string; vertical?: boolean }) {
    return (
        <>
            {list.split(" ").map((item, i) => {
                if (item === "_") return <span key={i} className="w-1" />;
                if (item === "|")
                    return vertical ? (
                        <div key={i} className="flex h-2 w-full items-center justify-end pl-3">
                            <span className="h-px w-full bg-[#b9bac6]" />
                        </div>
                    ) : (
                        <div key={i} className="flex h-full w-2 items-center justify-center">
                            <span className="h-7 w-px bg-[#b9bac6]" />
                        </div>
                    );
                const name = item.replace(/[*>~]/g, "");
                const drop = />|~/.test(item);
                return (
                    <div key={i} className="flex shrink-0 items-center">
                        <button
                            aria-label={name}
                            className={
                                item[0] === "*"
                                    ? "flex h-[39px] w-[39px] items-center justify-center border-2 border-[#0078d7] bg-[#cfe6f7]"
                                    : "flex h-[39px] w-[39px] items-center justify-center"
                            }
                        >
                            <Icon name={name} />
                        </button>
                        {drop && (
                            <button aria-label={name + " menu"} className="flex h-[39px] w-[18px] items-center justify-center">
                                <Caret pale={item.endsWith("~")} />
                            </button>
                        )}
                    </div>
                );
            })}
        </>
    );
}

function Bar({ children }: { children: ReactNode }) {
    return (
        <div className="flex h-[43px] shrink-0 items-stretch">
            <div className="flex items-center rounded-l-sm border-b-2 border-[#9496ac] bg-linear-to-b from-[#f6f9fe] via-[#e7e9f3] to-[#b3b4ca] pr-[3px]">
                <span className="mr-[2px] ml-1 h-6 w-[3px] border-l-3 border-dotted border-[#a4a6b8]" />
                {children}
            </div>
            <button
                aria-label="more"
                className="flex w-[21px] flex-col items-center justify-end gap-1 rounded-r-sm bg-linear-to-b from-[#adaec8] to-[#eff0fb] pb-1"
            >
                <span className="h-[3px] w-3 bg-black" />
                <Caret />
            </button>
        </div>
    );
}

function VBar({ list, narrow = false }: { list: string; narrow?: boolean }) {
    return (
        <div className={narrow ? "flex w-[43px] flex-col" : "flex w-[59px] flex-col"}>
            <div className="flex flex-col items-start rounded-t-sm border-x border-[#9a9cb2] bg-linear-to-r from-[#f6f9fe] via-[#e7e9f3] to-[#adaec6] pb-[2px]">
                <span className="mx-auto mt-1 mb-[2px] h-[3px] w-1/2 border-t-3 border-dotted border-[#a4a6b8]" />
                <Items list={list} vertical />
            </div>
            <button
                aria-label="more"
                className="flex h-5 items-center justify-end gap-1 rounded-b-sm bg-linear-to-r from-[#eceefb] to-[#b3b4ca] pr-1"
            >
                <span className="h-3 w-[3px] bg-black" />
                <svg viewBox="0 0 8 12" className="h-3 w-2">
                    <path d="M0 0v12l8-6z" />
                </svg>
            </button>
        </div>
    );
}

function Combo({ label, value, className, enabled = false }: { label: string; value: string; className: string; enabled?: boolean }) {
    return (
        <div className={"relative h-[37px] shrink-0 " + className}>
            <select
                aria-label={label}
                className={
                    enabled
                        ? "h-full w-full appearance-none bg-white px-1 text-[22px] text-black"
                        : "h-full w-full appearance-none border border-[#a0a0a0] bg-[#f0f0f0] px-1 text-[22px] text-[#777]"
                }
            >
                <option>{value}</option>
            </select>
            <span
                className={
                    enabled
                        ? "pointer-events-none absolute top-0 right-0 flex h-full w-[30px] items-center justify-center bg-linear-to-b from-[#eef0f8] to-[#b7b8cc]"
                        : "pointer-events-none absolute top-0 right-0 flex h-full w-[34px] items-center justify-center"
                }
            >
                <Caret pale={!enabled} />
            </span>
        </div>
    );
}

function PanelHeader({ title }: { title: string }) {
    return (
        <div className="flex h-10 shrink-0 items-center bg-linear-to-b from-[#bfccda] to-[#d6e3f1] pr-[7px] pl-1">
            <h2 className="flex-1 text-[24px] leading-[38px]">{title}</h2>
            <div className="flex items-center gap-3">
                <button aria-label="panel menu">
                    <svg viewBox="0 0 18 10" className="h-[10px] w-[18px]">
                        <path d="M0 0h18L9 10z" />
                    </svg>
                </button>
                <button aria-label="auto hide">
                    <svg viewBox="0 0 14 16" className="h-4 w-[14px]">
                        <path d="M3 1h8v9H3zM9 1v9M0 10h14M7 10v6" fill="none" stroke="#000" strokeWidth="2" />
                    </svg>
                </button>
                <button aria-label="close panel">
                    <svg viewBox="0 0 16 16" className="h-4 w-4">
                        <path d="M1 1l14 14M15 1L1 15" stroke="#000" strokeWidth="3" />
                    </svg>
                </button>
            </div>
        </div>
    );
}

function OpenFolder() {
    return (
        <svg viewBox="0 0 32 24" className="h-6 w-8 shrink-0">
            <path d="M1 22V3l3-2h8l3 3h11v5" fill="#f7dd8c" stroke="#b08a30" />
            <path d="M2 22l7-13h22l-6 13z" fill="#f3b43c" stroke="#8a6416" />
            <path d="M10 10h19l-2 5H8z" fill="#ffe08a" />
        </svg>
    );
}

function GraphThumb({ active = false }: { active?: boolean }) {
    return (
        <svg viewBox="0 0 32 32" className="h-8 w-8 shrink-0">
            <path d="M3 3h29v29H3z" />
            <path d="M1 1h27v28H1z" fill="#fff" stroke={active ? "#ff00ff" : "#777"} strokeWidth="2" />
            <path d="M5 3h21v20H5z" fill="#00e5e5" stroke="#e00" strokeWidth="1" />
            <path d="M5 13h21" stroke="#e00" />
            <path d="M8 10l3-3 3 1 4-3 5 4M7 22q4-5 17-5" fill="none" stroke="#000" strokeWidth="2" />
            <path d="M7 20q8-6 17-5" fill="none" stroke="#b0f" />
            <path d="M4 26h3M10 26h3M16 26h3M22 26h3" stroke="#000" strokeWidth="2" />
        </svg>
    );
}

function SheetThumb() {
    return (
        <svg viewBox="0 0 32 32" className="h-8 w-8 shrink-0">
            <path d="M3 3h29v29H3z" />
            <path d="M1 1h28v28H1z" fill="#fff" stroke="#777" strokeWidth="2" />
            <path d="M3 11h6v2H3zM12 11h6v2h-6zM21 11h6v2h-6zM3 16h6v2H3zM12 16h6v2h-6zM21 16h6v2h-6zM3 21h6v2H3zM12 21h6v2h-6zM21 21h6v2h-6zM3 26h6v2H3zM12 26h6v2h-6zM21 26h6v2h-6z" fill="#0e3" />
            <path d="M10.500 1v28M20 1v28M1 9h28M1 15h28M1 20h28M1 25h28" stroke="#447" />
            <g className="font-['Liberation_Sans',sans-serif] font-bold" fontSize="9" fill="#f00">
                <text x="2" y="8">A</text>
                <text x="12" y="8">B</text>
                <text x="21" y="8">C</text>
            </g>
        </svg>
    );
}

function ProjectManager() {
    return (
        <section className="flex w-[563px] shrink-0 flex-col pt-px pr-1 pl-px">
            <PanelHeader title="项目管理器 (1)" />
            <div className="flex h-[241px] shrink-0 flex-col border-2 border-[#a0a0a0] bg-white text-[24px]">
                <div className="flex h-[34px] items-center overflow-hidden pl-1 whitespace-nowrap">
                    <svg viewBox="0 0 32 28" className="mr-[5px] h-7 w-8 shrink-0">
                        <path d="M1 27V3l2-2h10l3 3h15v23z" fill="#d6cba4" stroke="#6b6346" />
                        <path d="M2 8h28" stroke="#efe8cf" strokeWidth="2" />
                    </svg>
                    Ge_Si_wafer_bonding_dark_poly-Ge_2nm_Ele
                </div>
                <div className="flex h-[36px] pl-5">
                    <span className="h-4 w-4 border-b border-l border-dotted border-[#777]" />
                    <span className="flex h-[34px] items-center gap-[6px] rounded-xs bg-[#d9d9d9] pr-2 pl-[2px]">
                        <OpenFolder />
                        Folder1
                    </span>
                </div>
                <div className="mt-auto flex h-[34px] items-center bg-[#f0f0f0] pl-[34px]">
                    <div className="h-5 w-[376px] bg-[#858585]" />
                </div>
            </div>
            <div className="mt-1 flex min-h-0 flex-1 flex-col border-2 border-[#a0a0a0] bg-white">
                <table className="w-full table-fixed border-collapse text-left text-[24px]">
                    <colgroup>
                        <col className="w-[186px]" />
                        <col className="w-[96px]" />
                        <col className="w-[246px]" />
                        <col />
                    </colgroup>
                    <thead>
                        <tr className="h-[39px]">
                            <th className="border-r border-[#dcdcdc] pl-1 font-normal">
                                <span className="flex items-center justify-between pr-3">
                                    名称
                                    <svg viewBox="0 0 8 5" className="h-[5px] w-2">
                                        <path d="M0 5h8L4 0z" fill="#888" />
                                    </svg>
                                </span>
                            </th>
                            <th className="border-r border-[#dcdcdc] pl-1 font-normal">大小</th>
                            <th className="border-r border-[#dcdcdc] pl-1 font-normal">注释</th>
                            <th />
                        </tr>
                    </thead>
                    <tbody>
                        {files.map((file) => (
                            <tr key={file.name} className={file.active ? "h-[35px] font-bold" : "h-[35px]"}>
                                <td className="border-r border-[#e3ecf5] pl-1 leading-[34px]">
                                    <span className="flex items-center gap-[2px]">
                                        {file.graph ? <GraphThumb active={file.active} /> : <SheetThumb />}
                                        {file.name}
                                    </span>
                                </td>
                                <td className="border-r border-[#e3ecf5] pl-2 leading-[34px]">{file.size}</td>
                                <td className="border-r border-[#e3ecf5]" />
                                <td />
                            </tr>
                        ))}
                    </tbody>
                </table>
                <div className="grid flex-1 grid-cols-[187px_96px_245px_1fr]">
                    <span className="border-r-2 border-[#cfe0f2]" />
                    <span className="border-r-2 border-[#cfe0f2]" />
                    <span className="border-r-2 border-[#e6eef7]" />
                </div>
            </div>
        </section>
    );
}

const xTicks = [1182, 1474, 1765, 2057];
const yTicks = [443, 680, 918, 1155];

function Plot() {
    return (
        <svg viewBox="747 324 1391 1098" className="block w-full max-w-[1391px] bg-white font-['Liberation_Serif',serif]">
            <g fontSize="80" textAnchor="middle">
                {["3.75", "4.50", "5.25", "6.00"].map((label, i) => (
                    <text key={label} x={xTicks[i] + 4} y="1328">{label}</text>
                ))}
                <text x="1551" y="1401">Position (μm)</text>
            </g>
            <g fontSize="80" textAnchor="end">
                {["12.9", "8.6", "4.3", "0.0"].map((label, i) => (
                    <text key={label} x="965" y={yTicks[i] + 24}>{label}</text>
                ))}
            </g>
            <text transform="translate(833 1246) rotate(-90)" fontSize="80">
                Electron Velocity (×10
                <tspan dy="-33" fontSize="56">6</tspan>
                <tspan dy="33">m/s)</tspan>
            </text>

            {series.map((s, i) => (
                <g key={s.name}>
                    <path d={`M1018 ${699 + i * 63}h113`} stroke={s.color} strokeWidth="9" strokeLinecap="round" />
                    <text x="1144" y={717 + i * 63} fontSize="50">{s.name}</text>
                </g>
            ))}

            <path d="M1220 599h92" stroke="#5c9bea" strokeWidth="3" />
            <path
                d="M971 1155h15l4-23 2-292 4-206 5-31h311M1312 1101V440M1312 449l12-7 32-4h184l4 3v70l2 170 2 320 1 129 4 25h379"
                fill="none"
                stroke="#b08080"
                strokeWidth="9"
                strokeLinecap="round"
                strokeLinejoin="round"
            />
            <path d="M970 327h1165v939H970z" fill="none" stroke="#000" strokeWidth="3" />
            <path
                d={
                    xTicks.map((x) => `M${x} 327v18M${x} 1266v-19`).join("") +
                    [1037, 1328, 1620, 1911].map((x) => `M${x} 327v9M${x} 1266v-9`).join("") +
                    yTicks.map((y) => `M970 ${y}h17M2135 ${y}h-19`).join("") +
                    [561, 799, 1036].map((y) => `M970 ${y}h8M2135 ${y}h-10`).join("")
                }
                stroke="#000"
                strokeWidth="3"
            />

            {/* zoomed range marker and the pointer to the inset */}
            <path d="M1290 1063h61v69h-61z" fill="#c6c6c6" fillOpacity=".55" />
            <path d="M1290 1063h61v69h-61z" fill="none" stroke="#ff8cc8" strokeOpacity=".85" strokeWidth="6" strokeDasharray="17 10" />
            <path d="M1342 1050L1650 745" stroke="#000" />
            <path d="M1664 730l-21 13 5 4 3 6z" />

            {/* inset */}
            <path d="M1671 353h440v399h-440z" fill="#fff" stroke="#000" strokeWidth="2" />
            <path
                d="M1671 422h7M1671 554h7M1671 687h7M1671 488h4M1671 621h4M2111 422h-7M2111 554h-7M2111 687h-7M2111 488h-4M2111 621h-4M1711 353v7M1937 353v7M1824 353v4M2050 353v4M1711 752v-7M1937 752v-7M1824 752v-4M2050 752v-4"
                stroke="#000"
                strokeWidth="2"
            />
            <g fontSize="39">
                <text x="1666" y="431" textAnchor="end">1.0021</text>
                <text x="1666" y="564" textAnchor="end">1.0010</text>
                <text x="1666" y="697" textAnchor="end">0.9999</text>
                <text x="1715" y="791" textAnchor="middle">4.0812</text>
                <text x="1941" y="791" textAnchor="middle">4.0824</text>
            </g>
            <g fill="none" strokeWidth="5">
                <path d="M1703 687q160-2 375 21" stroke="#8c8c8c" />
                <path d="M1703 495q60 1 150 4t225 6" stroke="#f57272" />
                <path d="M1703 503l375 5" stroke="#5c9bea" />
                <path d="M1703 573h375" stroke="#70cf97" />
                <path d="M1703 628h375" stroke="#c496e8" />
                <path d="M1703 656h375" stroke="#ffc933" />
                <path d="M1703 687h375" stroke="#33ffff" />
                <path d="M1703 354v370h375V354" stroke="#b08080" />
            </g>
            {series.map((s, i) => {
                const x = i % 2 ? 1896 : 1744;
                const y = 373 + Math.floor(i / 2) * 34.5;
                return (
                    <g key={s.name}>
                        <path d={`M${x + 2} ${y}h63`} stroke={s.color} strokeWidth="5" strokeLinecap="round" />
                        <text x={x + 71} y={y + 9} fontSize="28">{s.name}</text>
                    </g>
                );
            })}

            <g fontSize="66">
                <text x="1688" y="878">T= 300K</text>
                <text x="1703" y="961">λ=1310nm</text>
                <text x="1687" y="1050">
                    I = l.59W/cm
                    <tspan dy="-28" fontSize="44">2</tspan>
                </text>
                <text x="1688" y="1132">
                    V =0.95V
                    <tspan dy="18" fontSize="44">br</tspan>
                </text>
            </g>
        </svg>
    );
}

function GraphWindow() {
    return (
        <main className="flex min-w-0 flex-1 flex-col border-t-2 border-l-2 border-[#6f6f7a] bg-[#f0f0f0]">
            <div className="flex h-[38px] text-center font-['Liberation_Sans',sans-serif] text-[32px] leading-[36px] font-bold">
                <button className="w-[39px] border border-[#a0a0a0] bg-white text-[#444]">1</button>
                <button className="w-[39px] border border-[#a0a0a0] bg-[#669acf] text-white">2</button>
            </div>
            <div className="flex-1 pt-[110px] pr-[234px] pl-[84px]">
                <Plot />
            </div>
            <div className="h-[138px] shrink-0 border-t-2 border-[#b4b4b4] bg-[#c0c0c0]" />
        </main>
    );
}

function Expander() {
    return (
        <button aria-label="collapse" className="flex h-6 w-6 shrink-0 items-center justify-center border-2 border-[#9a9a9a] bg-[#f4f4f4]">
            <span className="h-[3px] w-3 bg-[#4560a8]" />
        </button>
    );
}

function Check({ label, children, bold = false }: { label: string; children?: ReactNode; bold?: boolean }) {
    return (
        <label className={bold ? "flex items-center font-bold" : "flex items-center"}>
            <span className="relative block h-[30px] w-[30px]">
                <input type="checkbox" defaultChecked className="block h-[30px] w-[30px] appearance-none rounded-sm bg-[#0060b8]" />
                <svg viewBox="0 0 30 30" className="pointer-events-none absolute inset-0">
                    <path d="M8 15l5 5 9-9" fill="none" stroke="#fff" strokeWidth="2" />
                </svg>
            </span>
            {children}
            <span className={children ? "ml-[2px]" : "ml-1"}>{label}</span>
        </label>
    );
}

function Elbow({ className }: { className: string }) {
    return (
        <span className={"flex flex-col self-stretch border-l border-dotted border-[#999] " + className}>
            <span className="h-1/2 border-b border-dotted border-[#999]" />
        </span>
    );
}

function ObjectManager() {
    return (
        <section className="flex flex-col">
            <PanelHeader title="对象管理器" />
            <div className="flex h-[467px] overflow-hidden border-2 border-[#646464] bg-white font-['Liberation_Sans','Noto_Sans_CJK_SC',sans-serif] text-[23px] leading-10">
                <div className="flex-1">
                    <div className="flex h-10 items-center gap-1 bg-[#0078d7] pl-[2px] text-white">
                        <Expander />
                        <OpenFolder />
                        Graph1 - 绘图
                    </div>
                    <div className="flex h-10 items-center pl-[14px]">
                        <Elbow className="w-[17px]" />
                        <Expander />
                        <span className="w-1" />
                        <Check label="Layer1" />
                    </div>
                    <div className="flex h-10 items-center pl-[14px]">
                        <span className="w-[29px] self-stretch border-l border-dotted border-[#999]" />
                        <Elbow className="w-[17px]" />
                        <Expander />
                        <span className="w-1" />
                        <Check label="g1" />
                    </div>
                    {series.map((s) => (
                        <div key={s.name} className="flex h-10 items-center pl-[14px]">
                            <span className="w-[58px] self-stretch border-l border-dotted border-[#999]" />
                            <Elbow className="w-4" />
                            <span className="w-[29px]" />
                            <Check label={s.name} bold={s.name === "1.10eV"}>
                                <span className="h-[3px] w-[79px]" style={{ background: s.color }} />
                            </Check>
                        </div>
                    ))}
                    <div className="flex h-10 items-center pl-[14px]">
                        <Elbow className="w-[17px]" />
                        <Expander />
                        <span className="w-1" />
                        <Check label="Layer2" />
                    </div>
                </div>
                <div className="w-[34px] bg-[#f0f0f0] px-[7px] pt-[34px]">
                    <div className="h-[218px] bg-[#858585]" />
                </div>
            </div>
        </section>
    );
}

const bi = "font-['Liberation_Sans',sans-serif] font-bold italic";
const bb = "font-['Liberation_Sans',sans-serif] font-bold";

const apps: { name: string; selected?: boolean; icon: ReactNode }[] = [
    {
        name: "添加App",
        icon: (
            <>
                <path d="M1 1h53v54H1z" fill="#fff" stroke="#2a8fcf" strokeWidth="2" />
                <path d="M0 1h55v7H0z" fill="#0b87cb" />
                <path d="M4 11h19v24H4z" fill="#c9c9c9" />
                <path d="M27 13h7M38 11h13v4H38zM28 20h24v14H28M4 41h6M13 39h10v4H13zM4 48h6M13 46h10v4H13z" fill="none" stroke="#bbb" strokeWidth="2" />
                <circle cx="44" cy="44" r="18" fill="#3eb83e" />
                <path d="M44 33v22M33 44h22" stroke="#fff" strokeWidth="8" />
                <path d="M44 35v18M35 44h18" stroke="#3eb83e" strokeWidth="2" />
            </>
        ),
    },
    {
        name: "Stats\nAdvisor",
        icon: (
            <>
                <path d="M29 32l31 29" stroke="#434a58" strokeWidth="4" />
                <path d="M30 1l3 16 12 6-14 8-3 13-11-9-15 2 5-14L3 9l15 3z" fill="#e8c840" stroke="#d4ad28" strokeWidth="2" />
                <path d="M45 2l1 5 5 1-5 1-1 5-1-5-5-1 5-1zM6 40l1 5 5 1-5 1-1 5-1-5-5-1 5-1z" fill="#f0c040" />
            </>
        ),
    },
    {
        name: "Speedy Fit",
        icon: (
            <>
                <path d="M1 1h62v62H1z" fill="#2a487c" />
                <path d="M20 16h18l-11 38H4l8-6H6l8-6H8l8-6h-5l8-6h-6l8-5h-5z" fill="#fff" />
                <path d="M38 14h24l-3 9H45l-2 8h11l-3 9H41l-4 14H28z" fill="#9ccaf5" />
            </>
        ),
    },
    {
        name: "Simple Fit",
        selected: true,
        icon: (
            <>
                <path d="M0 0h64v64H0z" fill="#0468cc" />
                <path d="M5 10v52h50" fill="none" stroke="#fff" strokeWidth="2" />
                <path d="M1 11l4-8 4 8zM52 57l9 4-9 3z" fill="#fff" />
                <path d="M8 58q22-2 32-12T58 6" fill="none" stroke="#ee0a80" strokeWidth="4" />
                <path d="M15 53l3 3-3 3-3-3zM27 51l3 3-3 3-3-3zM39 46l3 3-3 3-3-3zM46 34l3 3-3 3-3-3zM55 23l3 3-3 3-3-3zM58 6l3 3-3 3-3-3z" fill="#fff" />
            </>
        ),
    },
    {
        name: "Send Graphs\nto Word",
        icon: (
            <>
                <path d="M40 10h20v37H40z" fill="#fff" stroke="#0b5a9c" strokeWidth="2" />
                <path d="M43 16h14M43 22h14M43 28h14M43 34h14M43 40h14" stroke="#0b5a9c" strokeWidth="2" />
                <path d="M16 11l27-5v45l-27-6z" fill="#0a5798" />
                <text x="29" y="35" textAnchor="middle" fontSize="19" fill="#fff" className={bb}>W</text>
                <path d="M4 44h12v-6l12 10-12 10v-6H4z" fill="#3a8cf5" />
            </>
        ),
    },
    {
        name: "Send Graphs\nto PowerP...",
        icon: (
            <>
                <path d="M44 7h18v36H44z" fill="#fff" stroke="#d04423" strokeWidth="3" />
                <path d="M48 30h11M48 36h11" stroke="#d04423" strokeWidth="3" />
                <circle cx="53" cy="18" r="6" fill="#d04423" />
                <path d="M22 5l26-6v54l-26-6z" fill="#d04423" />
                <text x="34" y="35" textAnchor="middle" fontSize="26" fill="#fff" className={bb}>P</text>
                <path d="M0 48h17v-5l11 9-11 9v-5H0z" fill="#c94d34" />
            </>
        ),
    },
    {
        name: "Graph\nPublisher",
        icon: (
            <>
                <path d="M35 2h16l11 14v40H44" fill="#fff" stroke="#087a14" strokeWidth="3" />
                <path d="M2 6h26l14 14v42H2z" fill="#fff" stroke="#087a14" strokeWidth="3" />
                <path d="M28 4v16h14zM50 0v15h14z" fill="#087a14" />
                <path d="M7 16v30h30M11 32l7-5 7 4 9-6M11 40l7-5 7 4 9-6" fill="none" stroke="#087a14" strokeWidth="2" />
                <path d="M1 49h62v15H1z" fill="#087a14" />
                <text x="46" y="61" textAnchor="middle" fontSize="13" fill="#fff" className={bb}>PUB</text>
            </>
        ),
    },
    {
        name: "Graph\nMaker",
        icon: (
            <>
                <path d="M2 6h5M2 12h5M2 18h5M2 24h5M2 30h5M2 36h5" stroke="#e11" strokeWidth="3" />
                <path d="M11 6h5M11 12h5M11 18h5M11 24h5M11 30h5M11 36h5" stroke="#3aab6b" strokeWidth="3" />
                <path d="M20 6h5M20 12h5M20 18h5M20 24h5M20 30h5" stroke="#1a6fe0" strokeWidth="3" />
                <path d="M2 54l27-16q-3-15 11-20l12 3-9 9 3 6 9-4q-2 14-18 11L9 62z" fill="#7d7a00" />
                <path d="M30 50h8v12h-8z" fill="#e11" />
                <path d="M42 46h8v16h-8z" fill="#3aab6b" />
                <path d="M54 37h8v25h-8z" fill="#1a6fe0" />
            </>
        ),
    },
    {
        name: "Graph\nAnnotator",
        icon: (
            <>
                <circle cx="32" cy="32" r="31" fill="#2a85f5" />
                <path d="M42 14H14q-6 0-6 6v25q0 6 6 6h28q6 0 6-6v-8" fill="none" stroke="#111" strokeWidth="4" />
                <path d="M26 44l5-13 19-19 9 9-19 19z" fill="#111" />
                <path d="M34 35L50 19" stroke="#2a85f5" strokeWidth="3" />
            </>
        ),
    },
    {
        name: "Fitting\nFuncti...",
        icon: (
            <>
                <path d="M1 50V14l3-3h14l5 5h26v8" fill="#fff" stroke="#bcd3ea" strokeWidth="2" />
                <path d="M1 53l14-30h49L52 53z" fill="#1262a8" />
                <text x="31" y="46" textAnchor="middle" fontSize="24" fill="#fff" className={bi}>F</text>
                <circle cx="49" cy="50" r="11" fill="#0e5a9c" stroke="#fff" strokeWidth="2" />
                <path d="M49 43v14M42 50h14" stroke="#fff" strokeWidth="3" />
            </>
        ),
    },
];

function AppsPanel() {
    return (
        <section className="flex min-h-0 flex-1 flex-col">
            <PanelHeader title="Apps" />
            <div className="flex flex-1 border-t-2 border-[#a0a0a0] bg-[#f0f0f0]">
                <nav className="flex w-[42px] flex-col">
                    <svg viewBox="0 0 42 266" className="block h-[266px] w-[42px]">
                        <path d="M41 0v103L5 121v42l36 19v84" fill="none" stroke="#808080" />
                        <path d="M42 103L5 121v42l37 19z" fill="#fff" />
                        <path d="M41 103L5 121v42l36 19M5 183l12-10M5 183v64l36 19" fill="none" stroke="#808080" />
                        <path d="M15 5h14v3H15zM15 17l7-7 7 7zM15 41l7-6 7 6zM15 60h14l-7 6zM15 84h14l-7 6zM15 93h14v3H15z" />
                        <g fontSize="23" className="font-['Noto_Sans_CJK_SC',sans-serif]">
                            <text transform="translate(14 118) rotate(90)" className="font-bold">所有</text>
                            <text transform="translate(14 178) rotate(90)">连接器</text>
                        </g>
                    </svg>
                    <span className="flex-1 border-r border-[#808080]" />
                </nav>
                <div className="flex-1 border-r-2 border-[#a0a0a0] bg-white pl-[2px]">
                    <ul className="grid grid-cols-[150px_150px]">
                        {apps.map((app) => (
                            <li key={app.name} className="h-[150px]">
                                <button
                                    className={
                                        app.selected
                                            ? "flex w-[150px] flex-col items-center border-2 border-[#1010ee] bg-[#a2cff5]"
                                            : "flex w-[150px] flex-col items-center border-2 border-transparent"
                                    }
                                >
                                    <svg viewBox="0 0 64 64" className="h-16 w-16 overflow-visible">
                                        {app.icon}
                                    </svg>
                                    <span className="-mx-1 pt-[3px] text-[24px] leading-[31px] whitespace-pre">{app.name}</span>
                                </button>
                            </li>
                        ))}
                    </ul>
                </div>
            </div>
        </section>
    );
}

function ImeBar() {
    return (
        <div className="absolute right-0 bottom-0 flex h-[50px] w-[400px] items-center rounded-l-lg border-t-2 border-[#cfdcec] bg-[#fbfcff] pl-[72px]">
            <svg viewBox="0 0 64 60" className="absolute bottom-0 left-0 h-[60px] w-16">
                <path d="M0 12q0-4 5-5L44 1q6-1 8 4l11 36q2 8-6 10l-40 8q-6 1-8-5z" fill="#f4581c" />
                <text x="33" y="49" fontSize="54" textAnchor="middle" fill="#fff" className={bi}>S</text>
            </svg>
            <div className="flex items-center gap-[17px] text-[28px] leading-8 font-bold text-[#1170dd]">
                <button>中</button>
                <svg viewBox="0 0 24 24" className="ml-1 h-6 w-6">
                    <circle cx="5" cy="7" r="3" fill="none" stroke="#1170dd" strokeWidth="2" />
                    <path d="M14 20q5-2 4-6-4 0-4-4 4-4 7 1 1 8-7 11z" fill="#1170dd" />
                </svg>
                <svg viewBox="0 0 24 32" className="ml-2 h-8 w-6">
                    <rect x="7" y="1" width="10" height="18" rx="5" fill="#1170dd" />
                    <path d="M2 13q0 11 10 11t10-11M12 24v6M7 30h10" fill="none" stroke="#1170dd" strokeWidth="3" />
                </svg>
                <svg viewBox="0 0 30 24" className="ml-1 h-6 w-[30px]">
                    <rect x="1" y="1" width="28" height="22" rx="2" fill="none" stroke="#1170dd" strokeWidth="3" />
                    <path d="M6 7h3M12 7h3M18 7h3M24 7h1M6 12h3M12 12h3M18 12h3M24 12h1M8 18h14" stroke="#1170dd" strokeWidth="3" />
                </svg>
                <svg viewBox="0 0 36 32" className="h-8 w-9">
                    <path d="M1 9l9-6q5 6 12 0l10 6-4 7-5-2v17H9V14l-4 2z" fill="#a98bf5" />
                    <path d="M1 9l9-6q5 6 12 0l10 6-4 7-5-2v6H9v-6l-4 2z" fill="#ee7cc8" />
                    <circle cx="31" cy="5" r="5" fill="#f54b3c" />
                </svg>
                <svg viewBox="0 0 26 28" className="h-7 w-[26px]">
                    <path d="M1 2h10v11H1zM15 2h10v11H15zM1 17h10v10H1zM15 17h10v10H15z" fill="#1170dd" />
                </svg>
                <svg viewBox="0 0 42 42" className="h-[42px] w-[42px]">
                    <circle cx="20" cy="22" r="19" fill="#fffaf5" stroke="#e7dccb" />
                    <path d="M4 22l8-6q14-6 20 0l-6 6q-12 2-18 6z" fill="#d9641c" />
                    <path d="M16 28l8-4 3 2-5 5z" fill="#333" />
                    <path d="M36 6l2 6 4 1-4 2-2 6-2-6-4-2 4-1z" fill="#ffd23c" />
                </svg>
            </div>
        </div>
    );
}

function App() {
    return (
        <div className="relative flex h-screen flex-col overflow-hidden bg-[#f0f3fd] font-['Noto_Sans','Noto_Sans_CJK_SC',sans-serif] text-black">
            {/* title bar */}
            <header className="flex h-[45px] shrink-0 items-center bg-linear-to-r from-[#eaf4f5] to-[#eef3fc] pl-[2px]">
                <svg viewBox="0 0 32 32" className="h-8 w-8">
                    <path d="M8 1h23v22H8z" fill="#dfeefc" stroke="#7fb0dd" />
                    <path d="M16 1v22M24 1v22M8 8h23M8 16h23" stroke="#9fc6e8" />
                    <circle cx="13" cy="18" r="13" fill="#e8604e" fillOpacity=".92" />
                    <path d="M5 25l5-12 5 7 6-12" fill="none" stroke="#fff" strokeWidth="2" />
                </svg>
                <h1 className="ml-[5px] flex-1 text-[23px] leading-[45px]">
                    Ge_Si_wafer_bonding_dark_poly-Ge_2nm_Electron_Velocity.opju - D:\资料\111毕设材料\program\Origin_Graph_2024\ - /Folder1/ - OriginPro 2024 - [Graph1]
                </h1>
                <div className="flex">
                    <button aria-label="minimize" className="flex w-[92px] items-center justify-center">
                        <svg viewBox="0 0 20 20" className="h-5 w-5">
                            <path d="M0 10h20" stroke="#000" strokeWidth="2" />
                        </svg>
                    </button>
                    <button aria-label="restore" className="flex w-[92px] items-center justify-center">
                        <svg viewBox="0 0 20 20" className="h-5 w-5">
                            <rect x="1" y="4" width="15" height="15" rx="3" fill="none" stroke="#000" strokeWidth="2" />
                            <path d="M5 1h10q4 0 4 4v10" fill="none" stroke="#000" strokeWidth="2" />
                        </svg>
                    </button>
                    <button aria-label="close" className="flex w-[96px] items-center justify-center">
                        <svg viewBox="0 0 20 20" className="h-5 w-5">
                            <path d="M0 0l20 20M20 0L0 20" stroke="#000" strokeWidth="2" />
                        </svg>
                    </button>
                </div>
            </header>

            {/* menu bar */}
            <nav className="flex h-[42px] shrink-0 items-center bg-linear-to-r from-[#eaebfb] to-[#f3f6ff] pr-[11px] pl-[2px] text-[24px]">
                <span className="mr-1 h-6 w-[3px] border-l-3 border-dotted border-[#a4a6b8]" />
                <GraphThumb />
                <ul className="ml-[13px] flex flex-1 gap-[13px]">
                    {menus.map(([label, key]) => (
                        <li key={key}>
                            <button>
                                {label}(<u>{key}</u>)
                            </button>
                        </li>
                    ))}
                </ul>
                <svg viewBox="0 0 84 20" className="h-5 w-[84px]" fill="none" stroke="#000">
                    <path d="M4 16h12" strokeWidth="4" />
                    <path d="M36 9h9v9h-9zM40 9V2h9v9h-4" strokeWidth="3" />
                    <path d="M70 4l13 14M83 4L70 18" strokeWidth="3" />
                </svg>
            </nav>

            {/* toolbars */}
            <div className="flex h-[43px] shrink-0">
                <Bar>
                    <Items list="newProject newFolder newBook newGraph newMatrix newFunction> newLayout newNotes newSheet newTulip | open cloud save saveTemplate | recalc recalcStop |" />
                    <Combo label="zoom" value="100%" className="mx-[3px] w-[118px]" enabled />
                    <Items list="| print slide pagePink brush tile cascade | tree | *projectExplorer *objectManager resultsLog codeBuilder scriptWindow gears | addColumn" />
                </Bar>
                <Bar>
                    <Items list="sumRow sumColumn sort | setValues | histogram histogram2 histogram3 | filter filterOff filterRedo" />
                </Bar>
                <Bar>
                    <Items list="moon | copyC boxC | plotTheme~ _ | addC" />
                </Bar>
                <Bar>
                    <Items list="addMarker | X Y Z errorBar none | first prev next last" />
                </Bar>
            </div>
            <div className="flex h-[43px] shrink-0">
                <Bar>
                    <Items list="back forward noFolder | folderUp folderDown | swap pin | undoFolder" />
                </Bar>
                <Bar>
                    <Items list="importWizard import123 | importExcel reimport reimportGrid | importMulti | connector webData dataSource" />
                </Bar>
                <Bar>
                    <Items list="cut copy paste" />
                </Bar>
                <Bar>
                    <div className="mr-1 flex h-[37px] items-center border border-[#a0a0a0] bg-[#f0f0f0]">
                        <svg viewBox="0 0 32 32" className="ml-1 h-7 w-8 shrink-0">
                            <text x="10" y="21" fontSize="24" textAnchor="middle" fill="#999" className={serif}>T</text>
                            <text x="19" y="28" fontSize="28" textAnchor="middle" className={serif}>T</text>
                        </svg>
                        <select aria-label="font" className="h-full w-[185px] appearance-none text-[22px] text-[#777]">
                            <option>默认: Times New Roman</option>
                        </select>
                        <span className="flex w-[34px] justify-center">
                            <Caret pale />
                        </span>
                    </div>
                    <Combo label="font size" value="0" className="w-[119px]" />
                    <Items list="bold italic underline superscript subscript supsub greek bigger smaller align> verticalLines> _ fontColor~" />
                </Bar>
                <Bar>
                    <Items list="bucket~ _ palette~ _ pen~ bulb" />
                    <div className="mr-[6px] ml-[6px] flex h-[37px] w-[119px] items-center border border-[#a0a0a0] bg-[#f0f0f0] pl-1 text-[22px] text-[#777]">
                        <span className="h-[3px] w-[60px] shrink-0 bg-black" />
                        <select aria-label="line style" className="ml-1 w-4 appearance-none">
                            <option>实线</option>
                        </select>
                        <span className="flex flex-1 justify-center">
                            <Caret pale />
                        </span>
                    </div>
                    <Combo label="line width" value="0" className="w-[119px]" />
                    <button aria-label="pattern color" className="mr-[14px] ml-[14px] flex h-8 w-9 border border-[#a9aebd]" />
                    <span className="mr-2">
                        <Caret pale />
                    </span>
                    <Combo label="pattern width" value="0" className="w-[119px]" />
                    <Items list="_ hatch~ borders> mergeCells" />
                </Bar>
            </div>

            <div className="flex min-h-0 flex-1">
                {/* collapsed logs */}
                <aside className="flex w-[37px] shrink-0 flex-col gap-[15px] bg-[#eaecfb] pt-[2px] text-[23px] text-[#808080]">
                    <button className="flex h-[131px] w-[35px] items-start justify-center border-r border-b border-[#c5c5c5] bg-[#f3f3f3] pt-[9px] leading-[34px] [text-orientation:sideways] [writing-mode:vertical-rl]">
                        消息日志
                    </button>
                    <button className="flex h-[131px] w-[35px] items-start justify-center border-r border-b border-[#c5c5c5] bg-[#f3f3f3] pt-[9px] leading-[34px] [text-orientation:sideways] [writing-mode:vertical-rl]">
                        提示日志
                    </button>
                </aside>
                <div className="flex w-[61px] shrink-0 flex-col bg-[#eaecfb]">
                    <VBar list="*pointer zoomIn zoomOut crosshair target> converge maskLens> maskFace> dots text annotation> arrowTool> lineTool> rectTool> hand sqrt> graphTool> handFrame rotate" />
                    <VBar list="colorStripes rings boxH legendTool asterisk> ruler clockStamp folderStamp tableTool sqrt" />
                    <VBar narrow list="markM markX | updown updownLine | lock" />
                </div>

                <div className="flex min-w-0 flex-1 flex-col">
                    <div className="flex min-h-0 flex-1">
                        <ProjectManager />
                        <GraphWindow />
                        <div className="flex w-[50px] shrink-0 flex-col bg-[#eaecfb] pl-[2px]">
                            <VBar narrow list="slashes axesRed axesBlack axesUp swapXY *rescale | layout3 layout4 layout5 cascade | axisBL axisT axisR axisTRight axisInset axisInsetPlot" />
                            <VBar narrow list="alignLeft alignRight | alignTop alignBottom | centerV centerH | sameWidth sameHeight | distributeH distributeV bringFront sendBack | group ungroup | cropA cropB" />
                        </div>
                    </div>
                    <div className="flex h-[47px] shrink-0 items-center">
                        <Bar>
                            <Items list="plotLine> plotScatter> plotLineSymbol> plotBar> plotMulti> plotBox> plotArea> plotPolar> plotCandle> plotTemplate" />
                        </Bar>
                        <Bar>
                            <Items list="bar3d> | surface3d> scatter3d> contour> waves> heat" />
                        </Bar>
                        <Bar>
                            <Items list="mask1 mask2 | mask3 cellsGray cellsRed | cellsBlack" />
                        </Bar>
                        <Bar>
                            <Items list="spinLeft spinRight tiltLeft tiltRight raise lower perspective boxes3d fit3d axisCube frameCube" />
                            <Combo label="view angle" value="10" className="w-[119px]" />
                        </Bar>
                    </div>
                </div>

                <aside className="flex w-[458px] shrink-0 flex-col gap-[5px] pt-px">
                    <ObjectManager />
                    <AppsPanel />
                </aside>
            </div>

            {/* status bar */}
            <footer className="flex h-9 shrink-0 items-center justify-end border-t-2 border-[#d9d9e2] bg-[#f0f0f0] pr-[386px] text-[22px] whitespace-nowrap">
                <span className="border-l border-[#d0d0d0] px-2">--</span>
                <span className="w-[14px] border-l border-[#d0d0d0]">&nbsp;</span>
                <span className="border-l border-[#d0d0d0] pr-3 pl-1">AU : 开</span>
                <span className="border-l border-[#d0d0d0] pr-2 pl-1">Light Grids</span>
                <span className="w-[188px] overflow-hidden border-l border-[#d0d0d0] pl-1">8:[Book1]export1!</span>
            </footer>

            <ImeBar />
            <svg viewBox="0 0 58 58" className="absolute bottom-0 left-0 h-[58px] w-[58px]">
                <ellipse cx="23" cy="36" rx="23" ry="22" fill="#d99a92" />
                <path d="M40 38l14 14" stroke="#4a58cc" strokeWidth="9" strokeLinecap="round" />
                <circle cx="27" cy="21" r="19" fill="#c9cdf0" fillOpacity=".85" stroke="#2a62e8" strokeWidth="5" />
                <path d="M14 32l10-12 7 5 6-11" fill="none" stroke="#6f86d8" strokeWidth="2" />
            </svg>
            <p className="pointer-events-none absolute right-[6px] bottom-4 text-[56px] leading-[64px] text-[#d4d4d4]/80 [text-shadow:1px_1px_1px_#8f8f8f]">
                CSDN @电子科技小筑
            </p>
        </div>
    );
}

export default App;
